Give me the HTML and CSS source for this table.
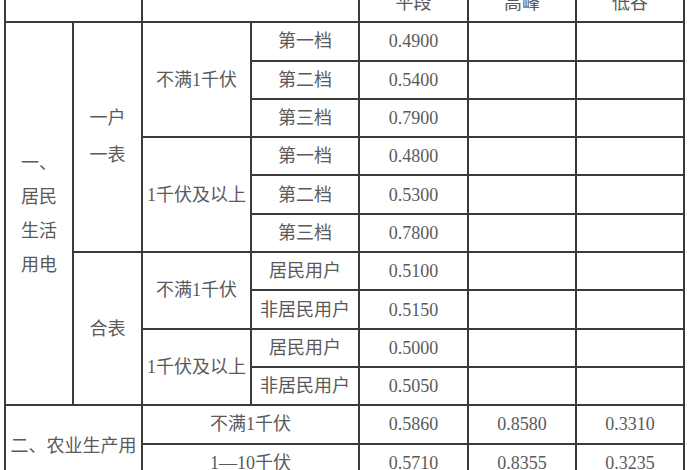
FILE: index.html
```html
<!DOCTYPE html>
<html lang="zh-CN">
<head>
<meta charset="utf-8">
<title>电价表</title>
<link rel="stylesheet" href="styles.css">
</head>
<body>
<table class="tariff">
  <colgroup>
    <col class="c1"><col class="c2"><col class="c3"><col class="c4">
    <col class="c5"><col class="c6"><col class="c7">
  </colgroup>
  <tr class="head">
    <td colspan="2"></td>
    <td colspan="2"></td>
    <td>平段</td>
    <td>高峰</td>
    <td>低谷</td>
  </tr>
  <tr>
    <td rowspan="10" class="tall">一、<br>居民<br>生活<br>用电</td>
    <td rowspan="6" class="mid">一户<br>一表</td>
    <td rowspan="3">不满1千伏</td>
    <td>第一档</td>
    <td>0.4900</td><td></td><td></td>
  </tr>
  <tr><td>第二档</td><td>0.5400</td><td></td><td></td></tr>
  <tr><td>第三档</td><td>0.7900</td><td></td><td></td></tr>
  <tr>
    <td rowspan="3">1千伏及以上</td>
    <td>第一档</td><td>0.4800</td><td></td><td></td>
  </tr>
  <tr><td>第二档</td><td>0.5300</td><td></td><td></td></tr>
  <tr><td>第三档</td><td>0.7800</td><td></td><td></td></tr>
  <tr>
    <td rowspan="4">合表</td>
    <td rowspan="2">不满1千伏</td>
    <td>居民用户</td><td>0.5100</td><td></td><td></td>
  </tr>
  <tr><td>非居民用户</td><td>0.5150</td><td></td><td></td></tr>
  <tr>
    <td rowspan="2">1千伏及以上</td>
    <td>居民用户</td><td>0.5000</td><td></td><td></td>
  </tr>
  <tr><td>非居民用户</td><td>0.5050</td><td></td><td></td></tr>
  <tr>
    <td rowspan="3" colspan="2" class="tall">二、农业生产用<br>电</td>
    <td colspan="2">不满1千伏</td>
    <td>0.5860</td><td>0.8580</td><td>0.3310</td>
  </tr>
  <tr><td colspan="2">1—10千伏</td><td>0.5710</td><td>0.8355</td><td>0.3235</td></tr>
  <tr><td colspan="2">35千伏及以上</td><td>0.5560</td><td>0.8130</td><td>0.3160</td></tr>
</table>
</body>
</html>
```
FILE: styles.css
```css
html, body {
  margin: 0;
  padding: 0;
  background: #ffffff;
}

body {
  padding-left: 4px;
  overflow: hidden;
}

.tariff {
  border-collapse: collapse;
  table-layout: fixed;
  width: 681px;
  margin-top: -17px;
  font-family: "Liberation Serif", "Noto Sans CJK SC", serif;
  font-size: 18px;
  color: #5a5a5a;
}

.c1 { width: 68px; }
.c2 { width: 69px; }
.c3 { width: 109px; }
.c4 { width: 108px; }
.c5 { width: 109px; }
.c6 { width: 108px; }
.c7 { width: 108px; }

.tariff td {
  border: 2px solid #3a3a3a;
  height: 36.3px;
  padding: 0;
  text-align: center;
  vertical-align: middle;
  white-space: nowrap;
  line-height: 22px;
}

.tariff td.tall {
  line-height: 34px;
}

.tariff td.mid {
  line-height: 37px;
}
```
